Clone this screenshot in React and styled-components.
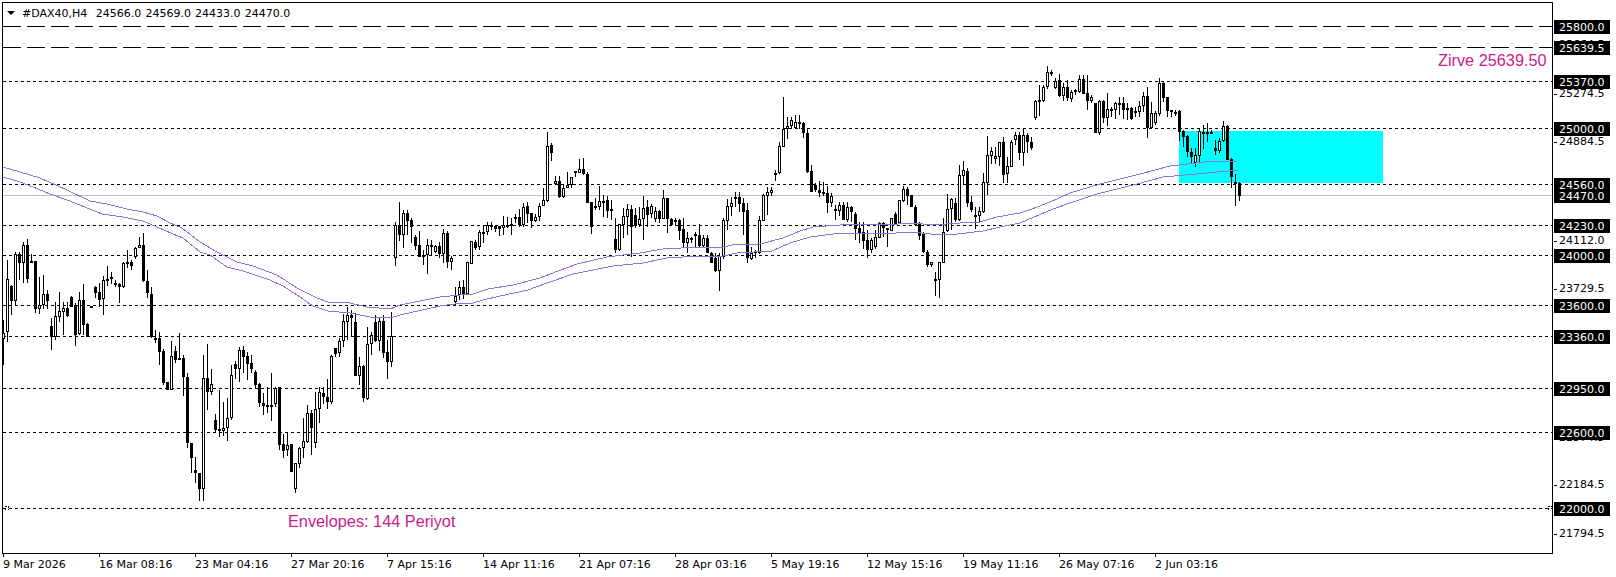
import React from "react";
import styled, { createGlobalStyle } from "styled-components";

const CYAN_BOX = { x: 1179, y: 131, w: 204, h: 52 };

const LONG_DASH_LEVELS = [26, 47];
const DASH_LEVELS = [81, 128, 184, 225, 255, 305, 336, 388, 432, 508];
const BID_LEVEL = 195;

// price axis: plain ticks first, boxed levels go over them
const PRICE_TICKS = [
  ["25664.5", 45],
  ["25274.5", 94],
  ["24884.5", 142],
  ["24112.0", 241],
  ["23729.5", 289],
  ["22574.5", 438],
  ["22184.5", 485],
  ["21794.5", 534],
];

const PRICE_BOXES = [
  ["25800.0", 26],
  ["25639.5", 47],
  ["25370.0", 81],
  ["25000.0", 128],
  ["24470.0", 195],
  ["24560.0", 184],
  ["24230.0", 225],
  ["24000.0", 255],
  ["23600.0", 305],
  ["23360.0", 336],
  ["22950.0", 388],
  ["22600.0", 432],
  ["22000.0", 508],
];

const TIME_LABELS = [
  "9 Mar 2026",
  "16 Mar 08:16",
  "23 Mar 04:16",
  "27 Mar 20:16",
  "7 Apr 15:16",
  "14 Apr 11:16",
  "21 Apr 07:16",
  "28 Apr 03:16",
  "5 May 19:16",
  "12 May 15:16",
  "19 May 11:16",
  "26 May 07:16",
  "2 Jun 03:16",
];

const ENVELOPE_UPPER =
  "3,167 20,172 40,178 67,190 90,201 107,204 127,209 143,212 157,216 170,223 182,228 200,242 217,252 237,262 253,266 277,275 297,288 317,298 328,302 350,303 367,307 390,309 400,305 440,297 460,295 473,294 488,289 513,285 540,278 550,274 577,264 607,257 640,253 663,249 700,247 723,247 737,244 760,244 783,238 800,231 813,227 840,225 863,224 883,225 913,223 933,225 960,223 980,222 997,217 1020,213 1032,209 1050,202 1070,193 1100,184 1140,174 1170,166 1205,162 1238,161";

const ENVELOPE_LOWER =
  "3,177 20,182 33,187 50,194 67,200 80,205 102,214 123,217 143,221 157,227 173,234 183,238 200,252 210,255 227,267 243,271 270,280 283,286 297,295 313,306 328,311 350,313 370,317 390,318 400,315 440,306 455,304 473,303 483,300 500,296 528,290 547,283 573,274 613,266 643,263 667,258 700,256 723,256 737,253 772,251 790,243 810,237 833,234 853,233 880,234 913,232 940,235 957,234 983,231 1000,227 1020,223 1053,209 1070,203 1097,194 1137,184 1163,177 1207,173 1238,170";

// [wick top, wick bottom, body top, body bottom, filled] in chart pixels, 4px apart
const CANDLES = [
  [320,365,333,339,0],[260,342,279,332,0],[285,315,286,301,1],[252,305,254,301,0],[252,280,254,263,1],
  [242,283,245,263,0],[239,283,245,279,1],[254,263,261,263,0],[261,313,261,309,1],[277,314,305,309,0],
  [275,309,294,305,0],[290,309,294,301,1],[318,350,326,337,1],[302,340,316,337,0],[292,322,311,317,0],
  [302,335,308,312,0],[302,317,308,316,1],[296,307,297,307,1],[303,346,305,335,1],[292,335,300,334,0],
  [284,335,300,325,1],[323,337,324,337,1],[306,308,306,307,1],[286,298,287,293,1],[283,307,292,300,1],
  [276,315,280,299,0],[266,286,279,281,1],[272,284,277,279,1],[280,287,283,285,1],[283,303,284,287,1],
  [262,288,263,287,0],[250,268,262,264,1],[260,270,262,266,1],[247,259,248,257,0],[237,248,245,248,0],
  [233,282,245,281,1],[270,298,281,293,1],[287,338,294,337,1],[330,343,338,339,1],[332,365,338,352,1],
  [349,385,351,383,1],[382,390,382,390,1],[341,390,356,390,0],[346,363,351,360,1],[333,360,358,360,1],
  [355,396,358,377,1],[373,448,377,443,1],[443,473,443,458,1],[457,483,470,473,1],[473,501,473,489,1],
  [355,501,378,489,0],[344,410,378,392,1],[369,395,384,392,0],[414,433,420,430,1],[390,437,429,431,1],
  [402,436,428,431,0],[398,441,418,428,0],[365,420,375,418,0],[361,379,364,369,1],[347,382,350,369,0],
  [346,373,350,357,1],[352,380,356,364,1],[355,373,363,369,1],[370,388,372,385,1],[383,407,384,403,1],
  [393,415,403,406,1],[387,413,405,406,1],[373,421,405,407,1],[387,407,388,404,0],[387,450,387,445,1],
  [434,458,444,451,1],[432,456,445,450,0],[444,472,444,472,1],[463,493,463,489,0],[447,468,448,464,0],
  [418,458,441,448,0],[405,443,413,442,0],[410,455,413,428,1],[392,448,409,443,0],[387,423,392,409,0],
  [387,404,393,397,1],[379,409,397,402,1],[355,404,356,402,0],[348,357,348,354,1],[338,357,341,353,0],
  [314,347,321,341,0],[307,340,315,322,0],[310,337,315,318,1],[313,376,322,376,1],[357,385,366,376,0],
  [365,402,366,398,1],[327,400,344,399,0],[332,355,335,344,0],[315,342,322,341,1],[317,351,321,341,0],
  [315,358,321,353,1],[340,379,352,362,1],[312,367,336,362,0],[222,266,225,258,0],[202,241,225,235,1],
  [210,248,213,235,0],[210,235,213,221,1],[218,243,220,227,1],[235,250,237,246,1],[231,257,245,257,1],
  [250,265,255,257,1],[239,274,245,255,0],[240,255,245,247,1],[245,253,246,252,0],[242,258,246,254,1],
  [229,263,233,254,0],[231,268,233,262,1],[256,270,258,262,0],[287,305,296,302,0],[281,300,287,295,0],
  [280,299,287,294,1],[262,294,262,294,0],[241,264,241,264,0],[240,250,242,248,1],[230,250,232,247,0],
  [225,243,232,233,1],[222,235,225,232,0],[222,230,225,227,1],[225,232,226,229,1],[226,236,226,229,1],
  [216,235,225,228,0],[217,228,225,226,1],[218,235,224,225,1],[214,223,217,219,1],[209,227,217,225,1],
  [203,227,207,225,0],[202,223,206,214,1],[213,228,213,221,1],[214,222,217,221,0],[203,221,206,217,0],
  [188,206,200,206,0],[132,202,146,201,0],[143,161,145,153,1],[176,185,181,184,0],[176,198,181,197,1],
  [185,198,188,197,0],[172,188,185,188,0],[177,188,177,185,0],[171,177,171,173,0],[159,173,169,173,0],
  [158,175,169,174,1],[172,203,174,203,1],[202,234,202,227,1],[198,210,206,207,1],[186,210,201,207,0],
  [195,217,201,202,1],[196,218,200,211,1],[200,220,209,211,1],[218,253,239,250,1],[224,251,224,250,0],
  [208,238,216,225,0],[204,235,209,217,0],[205,257,209,227,1],[208,228,215,226,1],[207,227,219,225,0],
  [196,240,208,219,0],[200,227,207,215,1],[204,218,206,214,0],[207,222,211,219,0],[210,223,211,219,1],
  [190,219,198,219,0],[198,233,198,219,1],[218,226,219,225,1],[218,225,220,221,1],[219,240,220,231,1],
  [218,248,229,243,1],[232,253,238,243,0],[237,243,238,239,1],[232,247,234,235,1],[224,247,235,246,1],
  [235,247,238,246,0],[235,253,238,253,1],[252,263,253,263,1],[253,272,258,271,1],[253,291,256,271,0],
  [218,259,220,257,0],[199,230,206,221,0],[197,216,203,207,0],[192,207,197,199,1],[192,212,197,204,1],
  [198,235,203,212,1],[203,263,210,258,1],[247,260,253,259,0],[250,258,251,252,1],[216,254,220,253,0],
  [194,221,195,221,0],[187,215,192,196,0],[187,196,190,193,0],[170,181,173,175,1],[142,174,146,173,0],
  [97,147,129,147,0],[117,139,126,129,0],[117,129,120,126,0],[115,129,122,128,0],[115,129,122,123,1],
  [122,138,123,133,1],[128,173,133,172,1],[165,192,171,192,1],[183,192,185,190,1],[181,197,190,193,1],
  [182,196,192,194,1],[186,213,193,203,1],[193,207,196,203,0],[205,220,209,210,1],[202,216,205,211,0],
  [202,220,205,220,1],[202,222,207,220,0],[206,222,207,212,1],[212,240,214,229,1],[222,243,228,233,1],
  [222,249,232,241,1],[230,258,240,250,1],[238,253,240,250,0],[230,249,237,247,0],[222,238,223,238,0],
  [222,237,223,228,1],[228,247,228,230,1],[218,231,218,231,0],[212,224,214,224,1],[200,224,200,223,0],
  [186,202,189,201,0],[187,205,189,196,1],[195,207,195,207,1],[205,226,207,225,1],[222,240,223,236,1],
  [232,253,233,252,1],[250,267,252,265,1],[262,267,262,265,0],[272,296,279,281,1],[262,298,262,280,0],
  [218,263,232,263,0],[194,232,209,231,0],[198,230,199,209,0],[198,222,203,220,1],[165,221,175,220,0],
  [161,185,170,176,0],[168,207,171,203,1],[196,212,202,210,1],[207,229,215,217,1],[207,223,211,216,0],
  [173,213,182,212,0],[136,195,155,183,0],[147,164,151,156,0],[147,164,156,159,0],[142,166,142,157,0],
  [137,183,142,175,1],[157,183,166,174,0],[140,167,142,167,0],[132,145,135,140,0],[132,160,135,153,1],
  [128,166,135,153,0],[133,153,135,142,1],[137,150,142,148,1],[100,120,101,118,0],[85,116,100,101,1],
  [85,102,87,101,0],[66,89,72,87,0],[70,76,72,74,1],[78,89,81,88,0],[74,97,80,96,1],
  [83,101,87,96,0],[80,101,87,98,1],[90,102,92,99,0],[89,95,90,92,1],[75,93,79,92,0],
  [75,94,79,94,1],[75,110,93,101,1],[95,103,97,101,0],[103,133,103,133,1],[100,135,101,133,0],
  [100,123,101,118,1],[93,126,109,118,0],[107,117,109,111,1],[102,119,103,110,0],[97,115,103,104,1],
  [97,119,103,110,1],[103,120,108,110,1],[107,120,108,119,1],[107,117,111,112,1],[101,117,106,112,0],
  [92,112,96,106,0],[87,138,96,128,1],[102,129,113,128,0],[111,125,113,123,0],[78,116,83,114,0],
  [81,102,83,98,1],[97,117,97,111,1],[110,117,110,112,1],[110,116,112,114,0],[110,141,111,132,1],
  [130,147,131,137,1],[135,157,136,152,1],[148,163,152,157,1],[148,167,155,163,0],[128,162,131,156,0],
  [125,149,132,133,1],[123,142,132,133,1],[130,134,132,133,1],[140,155,148,151,1],[138,153,141,151,0],
  [121,142,126,141,0],[125,160,126,160,1],[158,188,159,177,1],[174,206,182,184,1],[182,201,183,196,1],
];

const GlobalStyle = createGlobalStyle`
  html,
  body {
    margin: 0;
    padding: 0;
    background-color: #ffffff;
  }
`;

const Terminal = styled.div`
  width: 1616px;
  height: 577px;
  padding: 2px 0 0 2px;
  box-sizing: border-box;
  overflow: hidden;
  background-color: #ffffff;
  color: #000000;
  font-family: "DejaVu Sans", sans-serif;
  font-size: 11px;
`;

const ChartRow = styled.div`
  display: flex;
`;

const Plot = styled.div`
  position: relative;
  flex: none;
  width: 1551px;
  height: 552px;
  box-sizing: border-box;
  border: 1px solid #000000;
`;

const PlotCanvas = styled.svg`
  display: block;
`;

const Legend = styled.div`
  position: absolute;
  top: 3px;
  left: 4px;
  display: flex;
  align-items: center;
  gap: 7px;
  height: 14px;
  white-space: pre;
  word-spacing: 0.7px;
`;

const LegendArrow = styled.span`
  width: 0;
  height: 0;
  border-top: 4px solid #000000;
  border-left: 4px solid transparent;
  border-right: 4px solid transparent;
`;

const Note = styled.span`
  position: absolute;
  top: ${(p) => p.$top}px;
  left: ${(p) => p.$left}px;
  color: #cc1a8c;
  font-family: "Liberation Sans", Arial, sans-serif;
  font-size: 16.3px;
  line-height: 18px;
  white-space: nowrap;
`;

const PriceAxis = styled.div`
  position: relative;
  flex: none;
  width: 63px;
  height: 552px;
`;

const PriceTick = styled.span`
  position: absolute;
  top: ${(p) => p.$y - 9}px;
  left: 1px;
  padding-left: 5px;
  line-height: 14px;

  &::before {
    content: "";
    position: absolute;
    top: 7px;
    left: 0;
    width: 3px;
    height: 1px;
    background-color: #000000;
  }
`;

const PriceBox = styled.span`
  position: absolute;
  top: ${(p) => p.$y - 8}px;
  left: 1px;
  width: 56px;
  height: 14px;
  box-sizing: border-box;
  padding: 1px 0 0 5px;
  background-color: #000000;
  color: #ffffff;
  line-height: 14px;
`;

const TimeAxis = styled.div`
  display: flex;
  margin-left: 1px;
  height: 23px;
`;

const TimeCell = styled.span`
  position: relative;
  flex: none;
  width: 96px;
  padding-top: 4px;
  line-height: 14px;
  white-space: nowrap;

  &::before {
    content: "";
    position: absolute;
    top: 0;
    left: 0;
    width: 1px;
    height: 3px;
    background-color: #000000;
  }
`;

function Candle({ index, candle }) {
  const [high, low, top, bottom, filled] = candle;
  const col = 3 + index * 4;
  const height = bottom - top;

  return (
    <g>
      <rect x={col} y={high} width={1} height={low - high} fill="#000" />
      <rect x={col - 1} y={top} width={3} height={Math.max(height, 2)} fill="#000" />
      {!filled && height > 2 && (
        <rect x={col} y={top + 1} width={1} height={height - 2} fill="#fff" />
      )}
    </g>
  );
}

function ChartDrawing() {
  return (
    <PlotCanvas width={1549} height={550} viewBox="3 3 1549 550" shapeRendering="crispEdges">
      <rect {...{ x: CYAN_BOX.x, y: CYAN_BOX.y, width: CYAN_BOX.w, height: CYAN_BOX.h }} fill="#00ffff" />
      {LONG_DASH_LEVELS.map((y) => (
        <line key={y} x1={3} x2={1552} y1={y + 0.5} y2={y + 0.5} stroke="#000" strokeDasharray="18 6" />
      ))}
      {DASH_LEVELS.map((y) => (
        <line key={y} x1={3} x2={1552} y1={y + 0.5} y2={y + 0.5} stroke="#000" strokeDasharray="3 3" />
      ))}
      <line x1={3} x2={1552} y1={BID_LEVEL + 0.5} y2={BID_LEVEL + 0.5} stroke="#c0c0c0" />
      <path d="M5.5 510V506.5H8.5V510M1548.5 510V506.5H1552" fill="none" stroke="#000" strokeDasharray="2 1" />
      {CANDLES.map((candle, index) => (
        <Candle key={index} index={index} candle={candle} />
      ))}
      <polyline points={ENVELOPE_UPPER} fill="none" stroke="#9370db" />
      <polyline points={ENVELOPE_LOWER} fill="none" stroke="#9370db" />
    </PlotCanvas>
  );
}

export default function App() {
  return (
    <Terminal>
      <GlobalStyle />
      <ChartRow>
        <Plot>
          <ChartDrawing />
          <Legend>
            <LegendArrow />
            <span>#DAX40,H4  24566.0 24569.0 24433.0 24470.0</span>
          </Legend>
          <Note $top={48} $left={1435}>Zirve 25639.50</Note>
          <Note $top={509} $left={285}>Envelopes: 144 Periyot</Note>
        </Plot>
        <PriceAxis>
          {PRICE_TICKS.map(([label, y]) => (
            <PriceTick key={label} $y={y}>{label}</PriceTick>
          ))}
          {PRICE_BOXES.map(([label, y]) => (
            <PriceBox key={label} $y={y}>{label}</PriceBox>
          ))}
        </PriceAxis>
      </ChartRow>
      <TimeAxis>
        {TIME_LABELS.map((label) => (
          <TimeCell key={label}>{label}</TimeCell>
        ))}
      </TimeAxis>
    </Terminal>
  );
}
